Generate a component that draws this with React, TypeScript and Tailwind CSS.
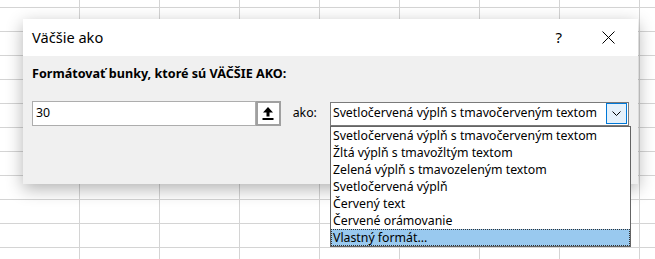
import React from "react";

const items = [
  "Svetločervená výplň s tmavočerveným textom",
  "Žltá výplň s tmavožltým textom",
  "Zelená výplň s tmavozeleným textom",
  "Svetločervená výplň",
  "Červený text",
  "Červené orámovanie",
  "Vlastný formát...",
];

export default function App() {
  return (
    <div
      className="relative w-[655px] h-[259px] overflow-hidden bg-white font-['Noto_Sans',sans-serif] text-black bg-[linear-gradient(to_right,#d4d4d4_1px,transparent_1px),linear-gradient(to_bottom,#d4d4d4_1px,transparent_1px)] [background-size:80px_24px] [background-position:79px_7px]"
    >
      {/* dialog window */}
      <div className="absolute left-[23px] top-[19px] w-[615px] h-[165px] flex flex-col bg-[#f0f0f0] shadow-[0_5px_16px_rgba(0,0,0,0.3)]">
        <div className="h-[37px] bg-white flex items-center pl-[9px]">
          <span className="text-[14.6px] leading-none">Väčšie ako</span>
          <span className="ml-auto text-[15px] leading-none mr-[40px]">?</span>
          <svg width="13" height="13" viewBox="0 0 13 13" className="mr-[23px]">
            <path d="M0.5 0.5 L12.5 12.5 M12.5 0.5 L0.5 12.5" stroke="#000" strokeWidth="1" />
          </svg>
        </div>

        <div className="px-[9px] pt-[10px]">
          <div className="text-[12.6px] font-bold leading-[16px]">
            Formátovať bunky, ktoré sú VÄČŠIE AKO:
          </div>

          <div className="flex items-center mt-[19px]">
            <div className="w-[226px] h-[25px] bg-white border border-[#adadad] flex items-center pl-[3px] text-[12.3px]">
              30
            </div>
            <div className="w-[25px] h-[25px] bg-white border-2 border-[#a0a0a0] flex items-center justify-center">
              <svg width="12" height="13" viewBox="0 0 12 13">
                <path d="M6 0 L11 5.5 L7.5 5.5 L7.5 9.5 L4.5 9.5 L4.5 5.5 L1 5.5 Z" fill="#000" />
                <rect x="0.5" y="11" width="11" height="2" fill="#000" />
              </svg>
            </div>
            <span className="ml-[12px] text-[12.3px]">ako:</span>
            <div className="ml-[13px] w-[302px] h-[24px] bg-white border border-[#7a7a7a] flex items-center pl-[2px] text-[12.3px]">
              <span className="flex-1">Svetločervená výplň s tmavočerveným textom</span>
              <div className="w-[21px] h-[21px] mr-[1px] bg-[#e5f1fb] border border-[#0078d7] flex items-center justify-center">
                <svg width="9" height="5" viewBox="0 0 9 5">
                  <path d="M0.5 0.5 L4.5 4.5 L8.5 0.5" stroke="#000" strokeWidth="1" fill="none" />
                </svg>
              </div>
            </div>
          </div>
        </div>
      </div>

      {/* open dropdown list */}
      <div className="absolute left-[330px] top-[126px] w-[301px] bg-white border border-[#646464] text-[12.3px]">
        {items.map((t, i) => (
          <div
            key={t}
            className={
              i === items.length - 1
                ? "h-[17px] leading-[17px] pl-[2px] bg-[#99c9ef] outline-1 outline-dotted outline-offset-[-1px] outline-[#333]"
                : "h-[17px] leading-[17px] pl-[2px]"
            }
          >
            {t}
          </div>
        ))}
      </div>
    </div>
  );
}
